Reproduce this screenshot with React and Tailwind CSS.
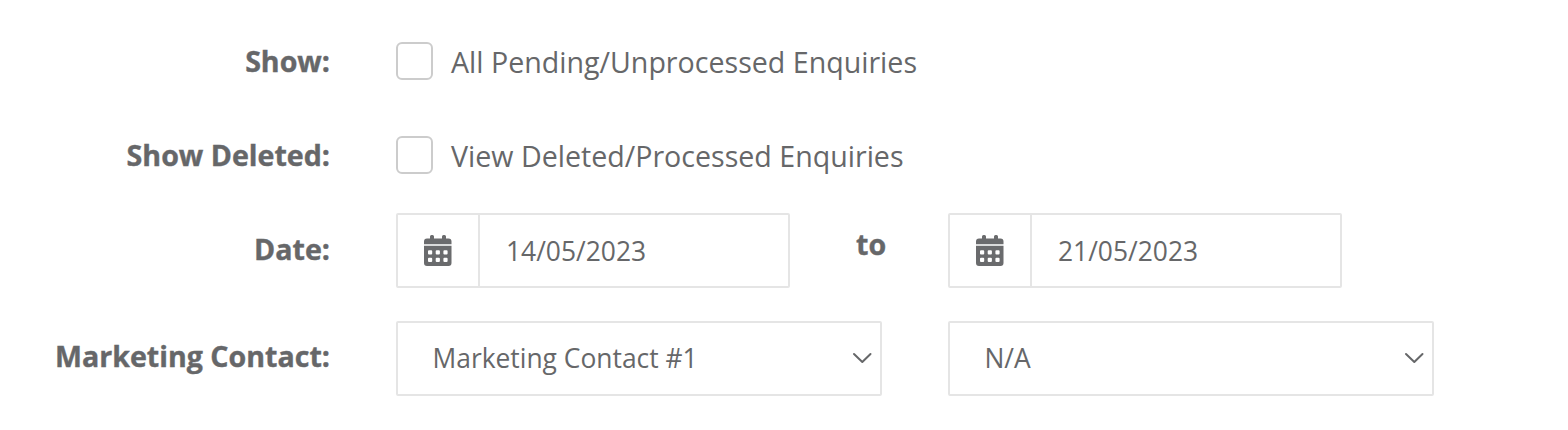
function CalendarIcon() {
  return (
    <svg viewBox="0 0 28 31" className="mb-px h-[31px] w-7" fill="#6a6b6d">
      <path d="M0 9.200V6.500a3 3 0 0 1 3-3h3V1.500a1.500 1.500 0 0 1 1.500-1.500h1a1.500 1.500 0 0 1 1.500 1.500v2h8v-2a1.500 1.500 0 0 1 1.500-1.500h1a1.500 1.500 0 0 1 1.500 1.500v2h2.500a3 3 0 0 1 3 3v2.700z" />
      <path fillRule="evenodd" d="M0 10.700h27.500v17.300a3 3 0 0 1-3 3H3a3 3 0 0 1-3-3zM5 15.300h2.200a1 1 0 0 1 1 1v2.200a1 1 0 0 1-1 1H5a1 1 0 0 1-1-1v-2.200a1 1 0 0 1 1-1zM12.700 15.300h2.200a1 1 0 0 1 1 1v2.200a1 1 0 0 1-1 1h-2.200a1 1 0 0 1-1-1v-2.200a1 1 0 0 1 1-1zM20.400 15.300h2.200a1 1 0 0 1 1 1v2.200a1 1 0 0 1-1 1h-2.200a1 1 0 0 1-1-1v-2.200a1 1 0 0 1 1-1zM5 22.800h2.200a1 1 0 0 1 1 1V26a1 1 0 0 1-1 1H5a1 1 0 0 1-1-1v-2.200a1 1 0 0 1 1-1zM12.700 22.800h2.200a1 1 0 0 1 1 1V26a1 1 0 0 1-1 1h-2.200a1 1 0 0 1-1-1v-2.200a1 1 0 0 1 1-1zM20.400 22.800h2.200a1 1 0 0 1 1 1V26a1 1 0 0 1-1 1h-2.200a1 1 0 0 1-1-1v-2.200a1 1 0 0 1 1-1z" />
    </svg>
  );
}

function Label({ children, className = "" }) {
  return <div className={`w-[330px] shrink-0 text-right text-[28.600px] leading-[38px] font-bold [-webkit-text-stroke:0.4px_#6a6b6d] ${className}`}>{children}</div>;
}

function CheckRow({ label, text }) {
  return (
    <div className="flex h-[38px]">
      <Label>{label}</Label>
      <label className="ml-[66px] flex">
        <span className="h-[38px] w-[37px] rounded-[6px] border-2 border-[#ccc]" />
        <span className="mt-px ml-[18px] text-[28.600px] leading-[38px] whitespace-nowrap">{text}</span>
      </label>
    </div>
  );
}

function DateField({ value }) {
  return (
    <div className="flex h-[75px] w-[394px] shrink-0 rounded-[2px] border-2 border-[#e5e5e5]">
      <div className="flex w-[82px] items-center justify-center border-r-2 border-[#e5e5e5]">
        <CalendarIcon />
      </div>
      <div className="pt-[17px] pl-[26px] text-[26.400px] leading-[38px]">{value}</div>
    </div>
  );
}

function SelectField({ value }) {
  return (
    <div className="flex h-[75px] w-[486px] shrink-0 items-center justify-between rounded-[2px] border-2 border-[#e5e5e5] pr-[8px] pb-px pl-[34.500px]">
      <span className="text-[26.400px] leading-[38px]">{value}</span>
      <svg viewBox="0 0 20 12" className="h-3 w-5" fill="none" stroke="#666769" strokeWidth="2" strokeLinecap="round" strokeLinejoin="round">
        <path d="M2 2l8.300 8 8.200-8" />
      </svg>
    </div>
  );
}

export default function App() {
  return (
    <div className="h-[430px] w-[1568px] bg-white pt-[42px] font-['Open_Sans',sans-serif] text-[#666769]">
      <CheckRow label="Show:" text="All Pending/Unprocessed Enquiries" />
      <div className="mt-[56px]">
        <CheckRow label="Show Deleted:" text="View Deleted/Processed Enquiries" />
      </div>
      <div className="mt-[39px] flex">
        <Label className="pt-[17px]">Date:</Label>
        <div className="ml-[66px] flex">
          <DateField value="14/05/2023" />
          <div className="w-[158px] pt-[12px] pl-[66px] text-[28.600px] leading-[38px] font-bold [-webkit-text-stroke:0.4px_#6a6b6d]">to</div>
          <DateField value="21/05/2023" />
        </div>
      </div>
      <div className="mt-[33px] flex">
        <Label className="pt-[16px]">Marketing Contact:</Label>
        <div className="ml-[66px] flex gap-[66px]">
          <SelectField value="Marketing Contact #1" />
          <SelectField value="N/A" />
        </div>
      </div>
    </div>
  );
}
